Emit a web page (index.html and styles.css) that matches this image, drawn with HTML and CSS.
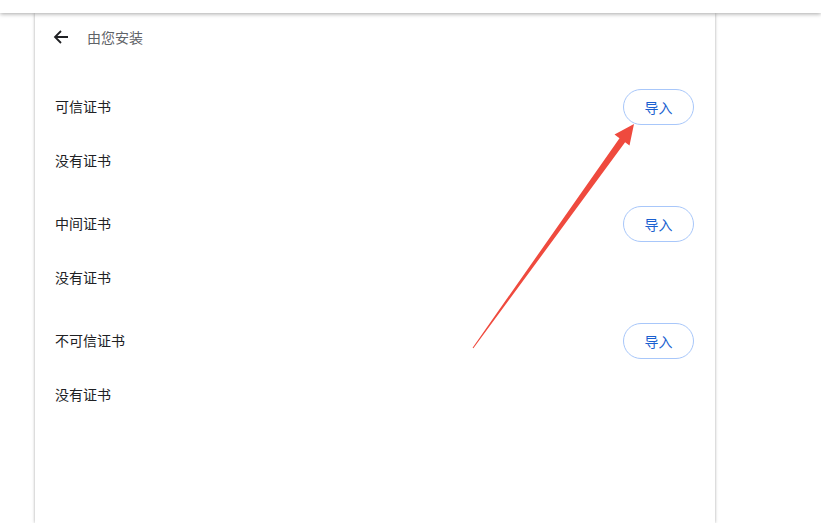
FILE: index.html
```html
<!DOCTYPE html>
<html lang="zh">
<head>
<meta charset="utf-8">
<link rel="stylesheet" href="styles.css">
</head>
<body>
<div class="topbar"></div>
<div class="card">
  <div class="header">
    <svg class="back" width="16" height="16" viewBox="0 0 16 16"><path d="M15 8H2.5M8 2L2 8l6 6" fill="none" stroke="#202124" stroke-width="1.8"/></svg>
    <span class="header-title">由您安装</span>
  </div>
  <div class="section">
    <div class="row"><span class="title">可信证书</span><button class="btn">导入</button></div>
    <div class="empty">没有证书</div>
  </div>
  <div class="section">
    <div class="row"><span class="title">中间证书</span><button class="btn">导入</button></div>
    <div class="empty">没有证书</div>
  </div>
  <div class="section">
    <div class="row"><span class="title">不可信证书</span><button class="btn">导入</button></div>
    <div class="empty">没有证书</div>
  </div>
</div>
<svg class="annot" width="821" height="523" viewBox="0 0 821 523"><polygon points="472.6,347.7 619.5,138.2 614.5,134.5 634,124 629.5,145.5 625.1,142.2 473.4,348.3" fill="#ef4a3e"/></svg>
</body>
</html>
```
FILE: styles.css
```css
html, body { margin: 0; padding: 0; background: #fff; overflow: hidden; }
body { font-family: "Noto Sans CJK SC", "Noto Sans", sans-serif; width: 821px; height: 523px; position: relative; }
.topbar { height: 13px; background: #fff; box-shadow: 0 1px 4px rgba(0,0,0,0.35); position: relative; z-index: 2; }
.card { margin-left: 35px; width: 680px; height: 510px; background: #fff; box-shadow: 0 0 3px rgba(0,0,0,0.35); position: relative; z-index: 1; }
.header { height: 47px; display: flex; align-items: center; padding-left: 18px; }
.back { display: block; }
.header-title { margin-left: 18px; font-size: 14px; color: #5f6368; }
.section { margin-top: 20px; }
.section + .section { margin-top: 10px; }
.row { height: 52px; display: flex; align-items: center; justify-content: space-between; padding: 0 21px 0 20px; }
.title { font-size: 14px; color: #202124; margin-top: -1px; }
.btn { width: 71px; height: 36px; border: 1px solid #a8c7fa; border-radius: 18px; background: #fff; color: #1a5fd0; font-family: inherit; font-size: 14px; padding: 0; margin-top: 2px; }
.empty { height: 55px; display: flex; align-items: center; padding-left: 20px; font-size: 14px; color: #202124; }
.annot { position: absolute; left: 0; top: 0; z-index: 3; pointer-events: none; }
```
